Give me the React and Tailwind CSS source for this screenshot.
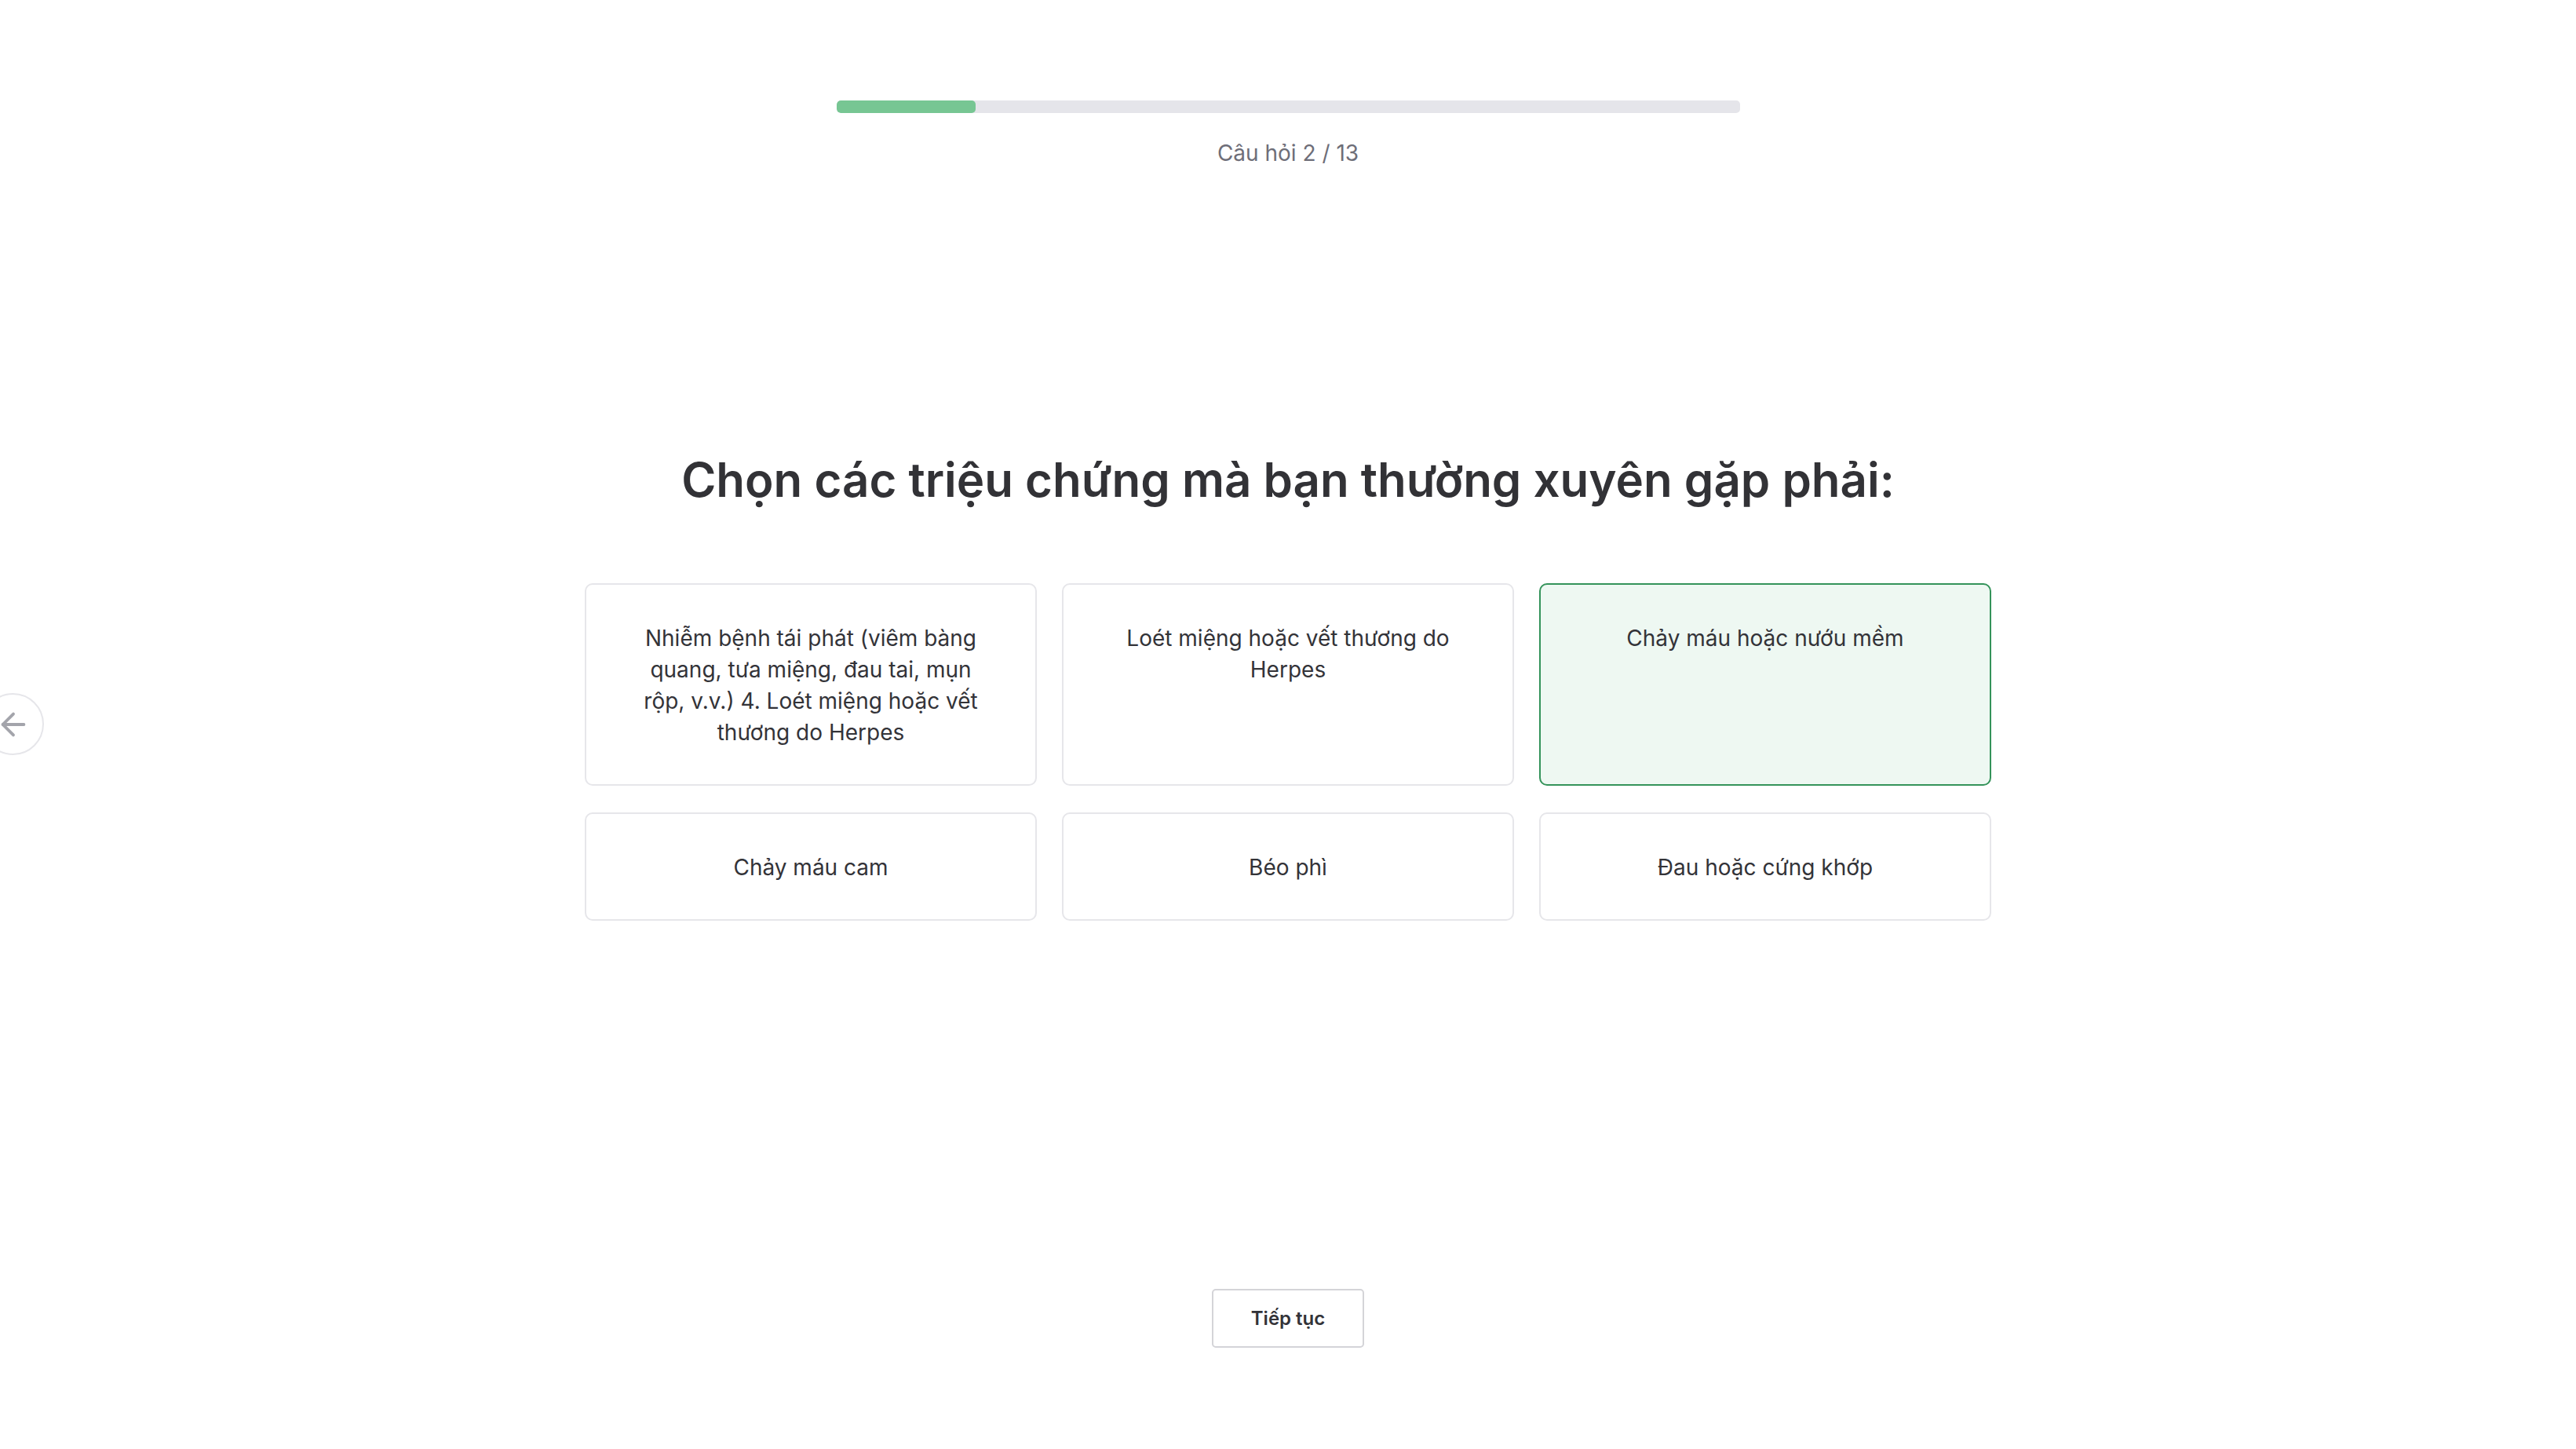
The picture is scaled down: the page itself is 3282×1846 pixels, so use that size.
import React, { useState } from "react";
import { ArrowLeft } from "lucide-react";

const options = [
  "Nhiễm bệnh tái phát (viêm bàng quang, tưa miệng, đau tai, mụn rộp, v.v.) 4. Loét miệng hoặc vết thương do Herpes",
  "Loét miệng hoặc vết thương do Herpes",
  "Chảy máu hoặc nướu mềm",
  "Chảy máu cam",
  "Béo phì",
  "Đau hoặc cứng khớp",
];

const App = () => {
  const [selected, setSelected] = useState([2]);
  const current = 2;
  const total = 13;

  const toggle = (i) => {
    setSelected((prev) => (prev.includes(i) ? prev.filter((x) => x !== i) : [...prev, i]));
  };

  return (
    <div className="relative min-h-screen w-full bg-white font-['Inter','Noto_Sans',sans-serif] text-[#333338]">
      {/* back button, pinned to the left edge */}
      <button className="absolute left-[-23px] top-[883px] flex h-[79px] w-[79px] items-center justify-center rounded-full border-2 border-[#e6e6ea] bg-white text-[#a3a4ab]">
        <ArrowLeft size={46} strokeWidth={2} />
      </button>

      <div className="flex flex-col items-center pt-[128px]">
        <div className="h-4 w-[1151px] overflow-hidden rounded-[5px] bg-[#e5e5ea]">
          <div className="h-full rounded-[5px] bg-[#77c693]" style={{ width: `${(current / total) * 100}%` }} />
        </div>
        <p className="mt-[33px] text-[28px] leading-[36px] text-[#6e6e78]">
          Câu hỏi {current} / {total}
        </p>

        <h1 className="mt-[365px] text-[60px] font-semibold leading-[67px] text-[#323236]">
          Chọn các triệu chứng mà bạn thường xuyên gặp phải:
        </h1>

        <div className="mt-[98px] grid w-[1792px] grid-cols-3 gap-x-[32px] gap-y-[34px]">
          {options.map((opt, i) => {
            const active = selected.includes(i);
            return (
              <div
                key={i}
                role="button"
                onClick={() => toggle(i)}
                className={
                  active
                    ? "cursor-pointer rounded-[10px] border-2 border-[#34935a] bg-[#eef8f2] px-[60px] pt-[48px] pb-[46px] text-center text-[28px] leading-[40px] text-[#333338]"
                    : "cursor-pointer rounded-[10px] border-2 border-[#e6e6ea] bg-white px-[60px] pt-[48px] pb-[46px] text-center text-[28px] leading-[40px] text-[#333338]"
                }
              >
                {opt}
              </div>
            );
          })}
        </div>

        <button className="mt-[469px] h-[75px] w-[194px] rounded-[5px] border-2 border-[#d4d4d8] bg-white text-[24px] font-semibold text-[#333338]">
          Tiếp tục
        </button>
      </div>
    </div>
  );
};

export default App;
